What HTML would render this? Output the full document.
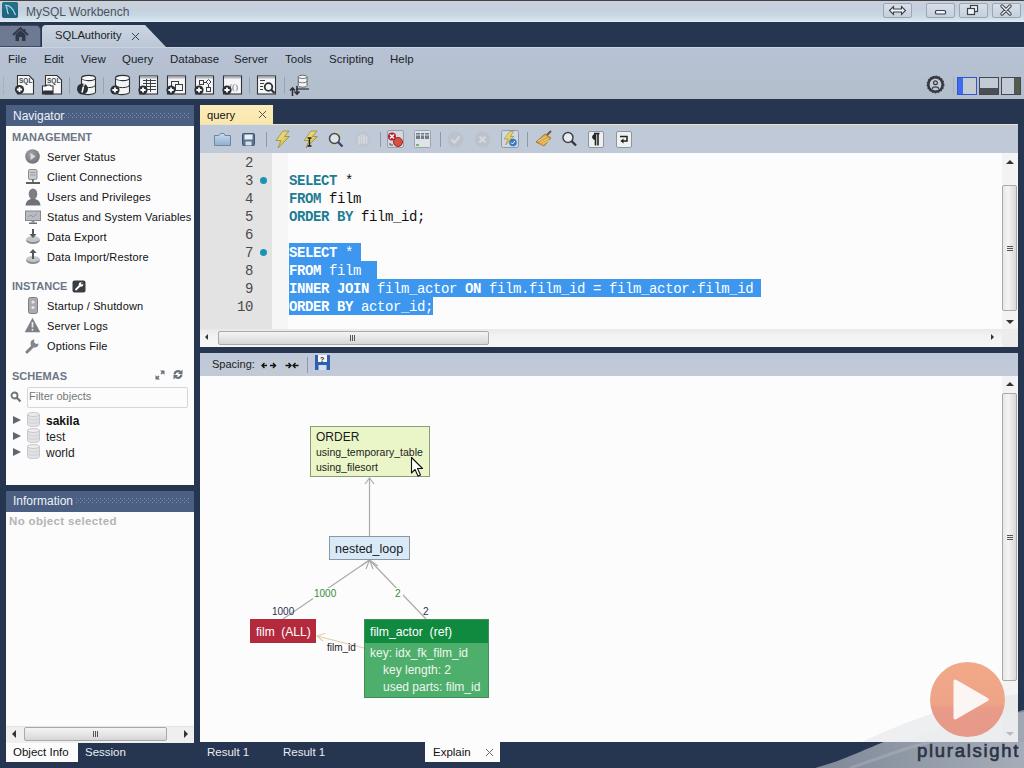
<!DOCTYPE html>
<html><head><meta charset="utf-8">
<style>
*{box-sizing:border-box;margin:0;padding:0}
html,body{width:1024px;height:768px;overflow:hidden;background:#263650;font-family:"Liberation Sans",sans-serif;position:relative}
.a{position:absolute}
.t{position:absolute;white-space:nowrap;line-height:1}
#title{left:0;top:0;width:1024px;height:22px;background:linear-gradient(#cdd0d7 0%,#c4d0de 40%,#c8d6e2 65%,#d4e2ec 88%,#e2eef9 100%);border-top:1px solid #3e444c}
#tabbar{left:0;top:22px;width:1024px;height:25px;background:#263650}
#menubar{left:0;top:47px;width:1024px;height:52px;background:linear-gradient(#b8c2d5,#b5c0d0 50%,#b3becc);border-top:1px solid #c9d3e2}
.menu{font-size:11.5px;color:#1a1f28;top:53.6px}
.nav{font-size:11px;color:#111;letter-spacing:0.15px}
.hdr{font-size:11px;font-weight:bold;color:#6c7786}
.code{font-family:"Liberation Mono",monospace;font-size:14px;letter-spacing:-0.4px;line-height:18px;height:18px}
.kw{color:#1f7c95;font-weight:bold}
.ln{font-family:"Liberation Mono",monospace;font-size:14px;color:#4a4a4a;text-align:right;width:60px;left:193px;letter-spacing:-0.4px}
</style></head><body>
<!-- title bar -->
<div class="a" id="title"></div>
<div class="a" style="left:2px;top:2px;width:16px;height:16px;border-radius:3px;background:linear-gradient(135deg,#3a7c9c,#1f5b75)"></div>
<div class="t" style="left:26px;top:6px;font-size:12px;color:#4a525d">MySQL Workbench</div>

<!-- tab bar -->
<div class="a" id="tabbar"></div>
<div class="a" style="left:0;top:25px;width:41px;height:22px;background:#6d7a92;border-radius:0 5px 0 0;border:1px solid #3e4a5e;border-left:none"></div>
<div class="a" style="left:42px;top:25px;width:124px;height:22px;background:linear-gradient(#ccd5e2,#bcc7d6);clip-path:polygon(0 0,103px 0,124px 22px,0 22px);border-radius:4px 0 0 0"></div>
<svg class="a" style="left:12px;top:26px" width="17" height="17" viewBox="0 0 17 17"><path d="M1 9 L8.5 2 L16 9" fill="none" stroke="#2f3848" stroke-width="1.8"/><path d="M12.5 3 V6" stroke="#2f3848" stroke-width="1.8"/><path d="M3.5 8.5 L8.5 4 L13.5 8.5 V15 H10 V11 H7 V15 H3.5 Z" fill="#2f3848"/></svg>
<div class="t" style="left:55px;top:30px;font-size:11.2px;color:#1a1f28">SQLAuthority</div>
<svg class="a" style="left:131px;top:32px" width="9" height="9" viewBox="0 0 9 9"><path d="M1 1 L8 8 M8 1 L1 8" stroke="#3a3f48" stroke-width="1"/></svg>

<!-- menu + toolbar -->
<div class="a" id="menubar"></div>
<div class="t menu" style="left:8px">File</div>
<div class="t menu" style="left:44px">Edit</div>
<div class="t menu" style="left:81px">View</div>
<div class="t menu" style="left:122px">Query</div>
<div class="t menu" style="left:170px">Database</div>
<div class="t menu" style="left:234px">Server</div>
<div class="t menu" style="left:285px">Tools</div>
<div class="t menu" style="left:329px">Scripting</div>
<div class="t menu" style="left:390px">Help</div>


<!-- main toolbar icons -->
<svg class="a" style="left:0;top:70px" width="320" height="29" viewBox="0 70 320 29">
 <defs>
  <g id="plus"><circle r="4.6" fill="#2b2f36"/><path d="M-2.6 0 H2.6 M0 -2.6 V2.6" stroke="#fff" stroke-width="1.8"/></g>
  <g id="cyl"><path d="M0.5 3 V17 A7 2.6 0 0 0 14.5 17 V3" fill="#f4f4f4" stroke="#2f3238" stroke-width="1.1"/><ellipse cx="7.5" cy="3" rx="7" ry="2.6" fill="#fafafa" stroke="#2f3238" stroke-width="1.1"/><path d="M0.5 10 A7 2.6 0 0 0 14.5 10" fill="none" stroke="#2f3238" stroke-width="1"/></g>
  <g id="frame"><rect x="0.5" y="0.5" width="18" height="18" fill="#f6f6f6" stroke="#2f3238" stroke-width="1.1"/><rect x="1" y="1" width="17" height="2" fill="#b4b8be"/></g>
 </defs>
 <path d="M3.5 77 V94" stroke="#9aa3b0" stroke-dasharray="1 1"/>
 <!-- sql new -->
 <path d="M17.5 75.5 H29 L33.5 80 V94 H17.5 Z" fill="#f7f7f7" stroke="#2f3238" stroke-width="1.1"/>
 <text x="19" y="82.5" font-family="Liberation Sans" font-weight="bold" font-size="6.5" fill="#3f444c">SQL</text>
 <use href="#plus" x="19.5" y="89.5"/>
 <!-- sql open -->
 <path d="M45.5 75.5 H57 L61.5 80 V94 H45.5 Z" fill="#f7f7f7" stroke="#2f3238" stroke-width="1.1"/>
 <text x="47" y="82.5" font-family="Liberation Sans" font-weight="bold" font-size="6.5" fill="#3f444c">SQL</text>
 <path d="M42.5 94 V86 H46 L47 85 H50 L51 86 H53 V94 Z" fill="#fff" stroke="#2f3238" stroke-width="1.1"/>
 <path d="M42 94 L43.5 90.5 H53 V94 Z" fill="#2f3238"/>
 <path d="M69.5 77 V94" stroke="#9aa3b0" stroke-width="1"/>
 <!-- db info -->
 <use href="#cyl" x="81" y="75"/>
 <circle cx="82.5" cy="89" r="5.5" fill="#2b2f36"/>
 <path d="M83.5 86.5 L82 92.5" stroke="#fff" stroke-width="1.6"/><circle cx="84" cy="84.8" r="0.9" fill="#fff"/>
 <path d="M103.5 77 V94" stroke="#9aa3b0" stroke-width="1"/>
 <!-- db new -->
 <use href="#cyl" x="115" y="75"/>
 <use href="#plus" x="115" y="90"/>
 <!-- table new -->
 <use href="#frame" x="139" y="75.5"/>
 <path d="M143 80.5 H156 M143 83.5 H156 M143 86.5 H156 M143 89.5 H156 M146.5 79 V92 M150.5 79 V92" stroke="#3a3e45" stroke-width="1"/>
 <use href="#plus" x="143" y="90"/>
 <!-- view new -->
 <use href="#frame" x="167" y="75.5"/>
 <rect x="171.5" y="81.5" width="7" height="6" fill="none" stroke="#3a3e45"/><rect x="175.5" y="84.5" width="7" height="6" fill="#f6f6f6" stroke="#3a3e45"/>
 <use href="#plus" x="171" y="90"/>
 <!-- routine new -->
 <use href="#frame" x="195" y="75.5"/>
 <rect x="199.5" y="80.5" width="4" height="4" fill="none" stroke="#3a3e45"/><path d="M208.5 79.5 L211 82 L208.5 84.5 L206 82 Z" fill="none" stroke="#3a3e45"/><rect x="206.5" y="87.5" width="4" height="4" fill="none" stroke="#3a3e45"/><path d="M203.5 82.5 H206 M208.5 84.5 V87.5" stroke="#3a3e45"/>
 <use href="#plus" x="199" y="90"/>
 <!-- function new -->
 <use href="#frame" x="223" y="75.5"/>
 <text x="229" y="90" font-family="Liberation Serif" font-size="9" fill="#6a6e75">f()</text>
 <use href="#plus" x="227" y="90"/>
 <path d="M249.5 77 V94" stroke="#9aa3b0" stroke-width="1"/>
 <!-- search table -->
 <use href="#frame" x="257" y="75.5"/>
 <path d="M260 80.5 H265 M260 83.5 H264 M260 86.5 H263 M260 89.5 H263" stroke="#3a3e45"/>
 <circle cx="268.5" cy="87" r="3.8" fill="#f6f6f6" stroke="#2b2f36" stroke-width="1.8"/><path d="M271 89.5 L274.5 93" stroke="#2b2f36" stroke-width="2.2"/>
 <path d="M284.5 77 V94" stroke="#9aa3b0" stroke-width="1"/>
 <!-- migration -->
 <g transform="translate(298,75) scale(0.62)"><use href="#cyl"/></g>
 <path d="M296 89 H309" stroke="#2f3238" stroke-width="1.2"/>
 <path d="M292.5 96 V88 M290 90.5 L292.5 88 L295 90.5" stroke="#2b2f36" stroke-width="1.6" fill="none"/>
 <path d="M297 86 V94 M294.5 91.5 L297 94 L299.5 91.5" stroke="#2b2f36" stroke-width="1.6" fill="none"/>
</svg>

<!-- left navigator -->
<div class="a" style="left:6px;top:105px;width:188px;height:21px;background:#4b5f83"></div>
<svg class="a" style="left:64px;top:113px" width="126" height="7" viewBox="0 0 126 7"><defs><pattern id="dp113" x="0" y="0" width="4" height="4" patternUnits="userSpaceOnUse"><rect x="0" y="0" width="1" height="1" fill="#8193b2"/><rect x="2" y="2" width="1" height="1" fill="#8193b2"/></pattern></defs><rect x="0" y="0" width="126" height="6" fill="url(#dp113)"/></svg>
<div class="t" style="left:13px;top:110px;font-size:12px;color:#eef2f8">Navigator</div>
<div class="a" style="left:6px;top:126px;width:188px;height:359px;background:#fcfcfd"></div>

<div class="a" style="left:6px;top:491px;width:188px;height:21px;background:#4b5f83"></div>
<svg class="a" style="left:76px;top:498px" width="114" height="7" viewBox="0 0 114 7"><defs><pattern id="dp498" x="0" y="0" width="4" height="4" patternUnits="userSpaceOnUse"><rect x="0" y="0" width="1" height="1" fill="#8193b2"/><rect x="2" y="2" width="1" height="1" fill="#8193b2"/></pattern></defs><rect x="0" y="0" width="114" height="6" fill="url(#dp498)"/></svg>
<div class="t" style="left:13px;top:495px;font-size:12px;color:#eef2f8">Information</div>
<div class="a" style="left:6px;top:512px;width:188px;height:231px;background:#fcfcfd"></div>


<!-- navigator content -->
<div class="t hdr" style="left:12px;top:132px;font-size:11px">MANAGEMENT</div>
<svg class="a" style="left:24px;top:148px" width="17" height="17" viewBox="0 0 17 17"><defs><radialGradient id="g1" cx="0.4" cy="0.35" r="0.7"><stop offset="0" stop-color="#a3a5aa"/><stop offset="1" stop-color="#6c6e74"/></radialGradient></defs><circle cx="8.5" cy="8.5" r="7.3" fill="url(#g1)"/><path d="M6.5 5 L11.5 8.5 L6.5 12 Z" fill="#d8d9dc"/></svg>
<div class="t nav" style="left:47px;top:152px">Server Status</div>
<svg class="a" style="left:25px;top:169px" width="16" height="16" viewBox="0 0 16 16"><rect x="3.5" y="0.5" width="8.5" height="10" rx="1.5" fill="#c9cacd" stroke="#8d8f94"/><path d="M5 3.5h5.5M5 6h5.5" stroke="#9a9ca0"/><rect x="7" y="10" width="1.8" height="3" fill="#707278"/><rect x="1" y="13" width="14" height="2" fill="#5e6066"/></svg>
<div class="t nav" style="left:47px;top:172px">Client Connections</div>
<svg class="a" style="left:25px;top:188px" width="16" height="18" viewBox="0 0 16 18"><ellipse cx="8" cy="6" rx="4.3" ry="5.5" fill="#7c7e84"/><path d="M0.5 17.5 C1 12.5 4 11 8 11 C12 11 15 12.5 15.5 17.5 Z" fill="#6f7177"/></svg>
<div class="t nav" style="left:47px;top:192px">Users and Privileges</div>
<svg class="a" style="left:25px;top:210px" width="16" height="15" viewBox="0 0 16 15"><rect x="0.5" y="1" width="15" height="9.5" fill="#b9bbbf" stroke="#86888d"/><path d="M3 7 L6 5 L8 7 L12 4" stroke="#8a9cb0" fill="none"/><rect x="6.5" y="10.5" width="3" height="2" fill="#8d8f94"/><rect x="4" y="12.5" width="8" height="1.5" fill="#6d6f75"/></svg>
<div class="t nav" style="left:47px;top:212px">Status and System Variables</div>
<svg class="a" style="left:25px;top:228px" width="16" height="17" viewBox="0 0 16 17"><ellipse cx="8" cy="12.5" rx="6.8" ry="3.5" fill="#8a8c91"/><ellipse cx="8" cy="11" rx="6.8" ry="3" fill="#c4c5c8"/><path d="M8 1 V9" stroke="#55575c" stroke-width="2"/><path d="M4.5 6 L8 10 L11.5 6 Z" fill="#55575c"/></svg>
<div class="t nav" style="left:47px;top:232px">Data Export</div>
<svg class="a" style="left:25px;top:248px" width="16" height="17" viewBox="0 0 16 17"><ellipse cx="8" cy="12.5" rx="6.8" ry="3.5" fill="#8a8c91"/><ellipse cx="8" cy="11" rx="6.8" ry="3" fill="#c4c5c8"/><path d="M8 4 V11" stroke="#55575c" stroke-width="2"/><path d="M4.5 5 L8 1 L11.5 5 Z" fill="#55575c"/></svg>
<div class="t nav" style="left:47px;top:252px">Data Import/Restore</div>

<div class="t hdr" style="left:12px;top:281px;font-size:11px">INSTANCE</div>
<svg class="a" style="left:72px;top:280px" width="14" height="13" viewBox="0 0 14 13"><rect x="0.5" y="0.5" width="13" height="12" rx="2" fill="#3a3c42"/><path d="M3.5 10 L8 5.5" stroke="#fff" stroke-width="1.8"/><circle cx="9" cy="4.5" r="2.3" fill="#fff"/><circle cx="10" cy="3.5" r="1" fill="#3a3c42"/></svg>
<svg class="a" style="left:27px;top:297px" width="12" height="17" viewBox="0 0 12 17"><rect x="1.5" y="0.5" width="9" height="16" rx="2" fill="#a9abaf" stroke="#7c7e83"/><circle cx="6" cy="5" r="1.6" fill="#e6e6e8"/><circle cx="6" cy="10.5" r="1.6" fill="#e6e6e8"/></svg>
<div class="t nav" style="left:47px;top:301px">Startup / Shutdown</div>
<svg class="a" style="left:24px;top:317px" width="17" height="16" viewBox="0 0 17 16"><path d="M8.5 0.8 L16.3 15.3 H0.7 Z" fill="#7d7f85"/><path d="M8.5 5 V10.5" stroke="#e8e8ea" stroke-width="1.8"/><circle cx="8.5" cy="12.8" r="1" fill="#e8e8ea"/></svg>
<div class="t nav" style="left:47px;top:321px">Server Logs</div>
<svg class="a" style="left:25px;top:337px" width="16" height="17" viewBox="0 0 16 17"><path d="M2 15 L9 8" stroke="#7f8186" stroke-width="3" stroke-linecap="round"/><path d="M9.5 2.5 a4 4 0 1 0 4 4 l-2.5 0.5 l-2 -2 z" fill="#85878c"/></svg>
<div class="t nav" style="left:47px;top:341px">Options File</div>

<div class="t hdr" style="left:12px;top:371px;font-size:11px">SCHEMAS</div>
<svg class="a" style="left:155px;top:370px" width="10" height="10" viewBox="0 0 10 10"><path d="M1.5 8.5 L4 6 M6 4 L8.5 1.5" stroke="#6a717b" stroke-width="1.6"/><path d="M0.5 5 V9.5 H5 Z M5 0.5 H9.5 V5 Z" fill="#6a717b"/></svg>
<svg class="a" style="left:172px;top:369px" width="12" height="11" viewBox="0 0 12 11"><path d="M2.5 5.5 a3.5 3.5 0 0 1 6 -2.3" fill="none" stroke="#6a717b" stroke-width="2.2"/><path d="M9.5 5.5 a3.5 3.5 0 0 1 -6 2.3" fill="none" stroke="#6a717b" stroke-width="2.2"/><path d="M10.5 0.5 V5 H6Z M1.5 10.5 V6 H6Z" fill="#6a717b"/></svg>
<svg class="a" style="left:10px;top:391px" width="12" height="12" viewBox="0 0 12 12"><circle cx="4.5" cy="4.5" r="3" fill="none" stroke="#6f737a" stroke-width="1.8"/><path d="M6.8 6.8 L10.5 10.5" stroke="#6f737a" stroke-width="2.2"/></svg>
<div class="a" style="left:27px;top:387px;width:161px;height:21px;border:1px solid #d4d6da;border-radius:2px;background:#fcfcfc"></div>
<div class="t" style="left:29px;top:391px;font-size:11px;color:#777">Filter objects</div>

<div class="a" style="left:13px;top:416px;width:0;height:0;border-top:4.5px solid transparent;border-bottom:4.5px solid transparent;border-left:8px solid #5f6672"></div>
<div class="a" style="left:13px;top:432px;width:0;height:0;border-top:4.5px solid transparent;border-bottom:4.5px solid transparent;border-left:8px solid #5f6672"></div>
<div class="a" style="left:13px;top:448px;width:0;height:0;border-top:4.5px solid transparent;border-bottom:4.5px solid transparent;border-left:8px solid #5f6672"></div>
<svg class="a" style="left:27px;top:412px" width="13" height="15" viewBox="0 0 13 15"><path d="M0.5 2.5 V12.5 A6 2.2 0 0 0 12.5 12.5 V2.5 Z" fill="#e3e3e5" stroke="#c6c7ca"/><ellipse cx="6.5" cy="2.5" rx="6" ry="2" fill="#ececee" stroke="#c6c7ca"/><path d="M0.5 6 A6 2 0 0 0 12.5 6 M0.5 9.3 A6 2 0 0 0 12.5 9.3" fill="none" stroke="#cfd0d3"/></svg>
<svg class="a" style="left:27px;top:428px" width="13" height="15" viewBox="0 0 13 15"><path d="M0.5 2.5 V12.5 A6 2.2 0 0 0 12.5 12.5 V2.5 Z" fill="#e3e3e5" stroke="#c6c7ca"/><ellipse cx="6.5" cy="2.5" rx="6" ry="2" fill="#ececee" stroke="#c6c7ca"/><path d="M0.5 6 A6 2 0 0 0 12.5 6 M0.5 9.3 A6 2 0 0 0 12.5 9.3" fill="none" stroke="#cfd0d3"/></svg>
<svg class="a" style="left:27px;top:444px" width="13" height="15" viewBox="0 0 13 15"><path d="M0.5 2.5 V12.5 A6 2.2 0 0 0 12.5 12.5 V2.5 Z" fill="#e3e3e5" stroke="#c6c7ca"/><ellipse cx="6.5" cy="2.5" rx="6" ry="2" fill="#ececee" stroke="#c6c7ca"/><path d="M0.5 6 A6 2 0 0 0 12.5 6 M0.5 9.3 A6 2 0 0 0 12.5 9.3" fill="none" stroke="#cfd0d3"/></svg>
<div class="t" style="left:46px;top:415px;font-size:12px;font-weight:bold;color:#111">sakila</div>
<div class="t" style="left:46px;top:431px;font-size:12px;color:#222">test</div>
<div class="t" style="left:46px;top:447px;font-size:12px;color:#222">world</div>

<div class="t" style="left:9px;top:516px;font-size:11.5px;font-weight:bold;color:#b4b4b4;letter-spacing:0.35px">No object selected</div>

<!-- query panel -->
<div class="a" style="left:200px;top:105px;width:73px;height:20px;background:linear-gradient(#fcecb8,#f9e6ae)"></div>
<div class="t" style="left:207px;top:110px;font-size:11.2px;color:#111">query</div>
<svg class="a" style="left:258px;top:110px" width="9" height="9" viewBox="0 0 9 9"><path d="M1 1 L8 8 M8 1 L1 8" stroke="#555a60" stroke-width="1"/></svg>
<div class="a" style="left:200px;top:124px;width:818px;height:29px;background:#c0c9d7;border-top:1px solid #e9e4c0"></div>
<div class="a" style="left:200px;top:153px;width:818px;height:194px;background:#fcfcfc"></div>
<div class="a" style="left:200px;top:153px;width:72px;height:176px;background:#e3e3e3"></div>


<!-- editor -->
<div class="a" style="left:272px;top:153px;width:16px;height:176px;background:#f6f6f6"></div>
<div class="t ln" style="top:156px">2</div>
<div class="t ln" style="top:174px">3</div>
<div class="t ln" style="top:192px">4</div>
<div class="t ln" style="top:210px">5</div>
<div class="t ln" style="top:228px">6</div>
<div class="t ln" style="top:246px">7</div>
<div class="t ln" style="top:264px">8</div>
<div class="t ln" style="top:282px">9</div>
<div class="t ln" style="top:300px">10</div>
<div class="a" style="left:260px;top:177px;width:7px;height:7px;border-radius:50%;background:#1b93b8"></div>
<div class="a" style="left:260px;top:249px;width:7px;height:7px;border-radius:50%;background:#1b93b8"></div>
<div class="a" style="left:289px;top:243px;width:72px;height:18px;background:#3d97ef"></div>
<div class="a" style="left:289px;top:261px;width:88px;height:18px;background:#3d97ef"></div>
<div class="a" style="left:289px;top:279px;width:472px;height:18px;background:#3d97ef"></div>
<div class="a" style="left:289px;top:297px;width:144px;height:18px;background:#3d97ef"></div>
<div class="t code" style="left:289px;top:172px;color:#111"><span class="kw">SELECT</span> *</div>
<div class="t code" style="left:289px;top:190px;color:#111"><span class="kw">FROM</span> film</div>
<div class="t code" style="left:289px;top:208px;color:#111"><span class="kw">ORDER</span> <span class="kw">BY</span> film_id;</div>
<div class="t code" style="left:289px;top:244px;color:#fff"><b>SELECT</b> *</div>
<div class="t code" style="left:289px;top:262px;color:#fff"><b>FROM</b> film</div>
<div class="t code" style="left:289px;top:280px;color:#fff"><b>INNER</b> <b>JOIN</b> film_actor <b>ON</b> film.film_id = film_actor.film_id</div>
<div class="t code" style="left:289px;top:298px;color:#fff"><b>ORDER</b> <b>BY</b> actor_id;</div>
<!-- editor scrollbars -->
<div class="a" style="left:1002px;top:153px;width:16px;height:176px;background:#f3f3f3"></div>
<div class="a" style="left:1002px;top:185px;width:15px;height:126px;border:1px solid #a9a9a9;border-radius:2px;background:linear-gradient(90deg,#e6e6e6,#f4f4f4 40%,#d9d9d9)"></div>
<div class="a" style="left:1007px;top:246px;width:6px;height:1px;background:#555;box-shadow:0 2px #555,0 4px #555"></div>
<div class="a" style="left:1006px;top:160px;width:0;height:0;border-left:4px solid transparent;border-right:4px solid transparent;border-bottom:4px solid #333"></div>
<div class="a" style="left:1006px;top:320px;width:0;height:0;border-left:4px solid transparent;border-right:4px solid transparent;border-top:4px solid #333"></div>
<div class="a" style="left:200px;top:329px;width:802px;height:18px;background:linear-gradient(#e9e9e9,#f3f3f3 40%,#f6f6f6)"></div>
<div class="a" style="left:1002px;top:329px;width:16px;height:18px;background:#ececec"></div>
<div class="a" style="left:218px;top:331px;width:271px;height:14px;border:1px solid #a9a9a9;border-radius:2px;background:linear-gradient(#f4f4f4,#e6e6e6 50%,#d6d6d6)"></div>
<div class="a" style="left:350px;top:335px;width:1px;height:6px;background:#555;box-shadow:2px 0 #555,4px 0 #555"></div>
<div class="a" style="left:205px;top:334px;width:0;height:0;border-top:3.5px solid transparent;border-bottom:3.5px solid transparent;border-right:3.5px solid #333"></div>
<div class="a" style="left:991px;top:334px;width:0;height:0;border-top:3.5px solid transparent;border-bottom:3.5px solid transparent;border-left:3.5px solid #333"></div>

<div class="a" style="left:200px;top:353px;width:818px;height:23px;background:linear-gradient(#bdc8da,#c2cad6)"></div>
<div class="t" style="left:212px;top:359px;font-size:11px;color:#222">Spacing:</div>
<div class="a" style="left:200px;top:376px;width:818px;height:366px;background:#fcfcfd"></div>


<!-- explain canvas -->
<svg class="a" style="left:200px;top:376px" width="802" height="366" viewBox="200 376 802 366">
 <g stroke="#ababab" stroke-width="1.2" fill="none">
  <path d="M369.5 536 V478"/>
  <path d="M365 484 L369.5 478 L374 484"/>
  <path d="M283 619 L369.5 560"/>
  <path d="M426 619 L369.5 560"/>
  <path d="M361 566 L369.5 560 L366 569 M378 566 L369.5 560 L373 569"/>
 </g>
 <path d="M364 648 L317 636" stroke="#e2cba8" stroke-width="1.1" fill="none"/>
 <path d="M325 633.5 L317 636 L323 641" stroke="#e2cba8" stroke-width="1.1" fill="none"/>
 <rect x="313" y="588" width="26" height="13" fill="#fcfcfd"/>
 <rect x="393" y="588" width="10" height="13" fill="#fcfcfd"/>
 <rect x="310.5" y="426.5" width="119" height="50" fill="#eaf6c7" stroke="#8d9a7b"/>
 <rect x="329.5" y="536.5" width="80" height="23" fill="#d9e9f8" stroke="#8c97a4"/>
 <rect x="250" y="619" width="66" height="24" fill="#b32a3d"/>
 <rect x="364" y="619" width="125" height="24" fill="#0f8a3f"/>
 <rect x="364" y="643" width="125" height="55" fill="#4eae6c"/>
 <rect x="364.5" y="619.5" width="124" height="78" fill="none" stroke="#3f8f58"/>
</svg>
<div class="t" style="left:316px;top:431px;font-size:12px;color:#1a1a1a">ORDER</div>
<div class="t" style="left:316px;top:447px;font-size:10.5px;color:#222">using_temporary_table</div>
<div class="t" style="left:316px;top:462px;font-size:10.5px;color:#222">using_filesort</div>
<div class="t" style="left:335px;top:543px;font-size:12.5px;color:#1a1a1a">nested_loop</div>
<div class="t" style="left:314px;top:589px;font-size:10px;color:#3a8a3a">1000</div>
<div class="t" style="left:395px;top:589px;font-size:10px;color:#3a8a3a">2</div>
<div class="t" style="left:272px;top:607px;font-size:10px;color:#2a2f55">1000</div>
<div class="t" style="left:423px;top:607px;font-size:10px;color:#2a2f55">2</div>
<div class="t" style="left:256px;top:626px;font-size:12px;color:#fff">film&nbsp; (ALL)</div>
<div class="t" style="left:370px;top:626px;font-size:12.2px;color:#fff">film_actor&nbsp; (ref)</div>
<div class="t" style="left:370px;top:647px;font-size:12px;color:#eef6ef">key: idx_fk_film_id</div>
<div class="t" style="left:383px;top:664px;font-size:12px;color:#eef6ef">key length: 2</div>
<div class="t" style="left:383px;top:681px;font-size:12px;color:#eef6ef">used parts: film_id</div>
<div class="t" style="left:327px;top:643px;font-size:10px;color:#1a1a1a">film_id</div>
<!-- explain scrollbar -->
<div class="a" style="left:1002px;top:376px;width:16px;height:366px;background:#f3f3f3"></div>
<div class="a" style="left:1002px;top:393px;width:15px;height:288px;border:1px solid #a9a9a9;border-radius:2px;background:linear-gradient(90deg,#e6e6e6,#f4f4f4 40%,#d9d9d9)"></div>
<div class="a" style="left:1007px;top:535px;width:6px;height:1px;background:#555;box-shadow:0 2px #555,0 4px #555"></div>
<div class="a" style="left:1006px;top:382px;width:0;height:0;border-left:4px solid transparent;border-right:4px solid transparent;border-bottom:4px solid #333"></div>
<div class="a" style="left:1006px;top:732px;width:0;height:0;border-left:4px solid transparent;border-right:4px solid transparent;border-top:4px solid #333"></div>

<!-- info scrollbar -->
<div class="a" style="left:6px;top:726px;width:188px;height:17px;background:#efefef;border-top:1px solid #e4e4e4"></div>
<div class="a" style="left:24px;top:727px;width:143px;height:14px;border:1px solid #a9a9a9;border-radius:2px;background:linear-gradient(#f4f4f4,#e6e6e6 50%,#d6d6d6)"></div>
<div class="a" style="left:93px;top:731px;width:1px;height:6px;background:#555;box-shadow:2px 0 #555,4px 0 #555"></div>
<div class="a" style="left:12px;top:730px;width:0;height:0;border-top:4px solid transparent;border-bottom:4px solid transparent;border-right:4px solid #333"></div>
<div class="a" style="left:184px;top:730px;width:0;height:0;border-top:4px solid transparent;border-bottom:4px solid transparent;border-left:4px solid #333"></div>

<!-- bottom tabs -->
<div class="a" style="left:6px;top:743px;width:72px;height:19px;background:#fcfcfd"></div>
<div class="t" style="left:13px;top:747px;font-size:11.5px;color:#111">Object Info</div>
<div class="t" style="left:85px;top:747px;font-size:11.5px;color:#e8ecf2">Session</div>
<div class="t" style="left:207px;top:747px;font-size:11.5px;color:#e8ecf2">Result 1</div>
<div class="t" style="left:283px;top:747px;font-size:11.5px;color:#e8ecf2">Result 1</div>
<div class="a" style="left:425px;top:742px;width:75px;height:20px;background:#fcfcfd"></div>
<div class="t" style="left:433px;top:747px;font-size:11.5px;color:#111">Explain</div>
<svg class="a" style="left:485px;top:748px" width="9" height="9" viewBox="0 0 9 9"><path d="M1 1 L8 8 M8 1 L1 8" stroke="#6a6f78" stroke-width="1"/></svg>


<!-- window buttons -->
<div class="a" style="left:883px;top:3px;width:29px;height:15px;border:1px solid #9ba6b4;border-radius:2px;background:linear-gradient(#d6dfea,#c6d1de)"></div>
<div class="a" style="left:926px;top:3px;width:29px;height:15px;border:1px solid #9ba6b4;border-radius:2px;background:linear-gradient(#d6dfea,#c6d1de)"></div>
<div class="a" style="left:959px;top:3px;width:29px;height:15px;border:1px solid #9ba6b4;border-radius:2px;background:linear-gradient(#d6dfea,#c6d1de)"></div>
<div class="a" style="left:992px;top:3px;width:29px;height:15px;border:1px solid #9ba6b4;border-radius:2px;background:linear-gradient(#d6dfea,#c6d1de)"></div>
<svg class="a" style="left:880px;top:0" width="144" height="22" viewBox="880 0 144 22">
 <path d="M889.5 10.5 L893.5 6.5 V9 H901.5 V6.5 L905.5 10.5 L901.5 14.5 V12 H893.5 V14.5 Z" fill="#f2f5f8" stroke="#3b4049" stroke-width="1.1"/>
 <rect x="935.5" y="10.5" width="10" height="3.5" rx="1" fill="#f2f5f8" stroke="#3b4049" stroke-width="1.2"/>
 <rect x="970.5" y="5.5" width="7" height="6" fill="#f2f5f8" stroke="#3b4049" stroke-width="1.2"/>
 <rect x="967.5" y="8.5" width="7" height="6" fill="#f2f5f8" stroke="#3b4049" stroke-width="1.2"/>
 <path d="M1002 6 L1010 14 M1010 6 L1002 14" stroke="#3b4049" stroke-width="3.4" stroke-linecap="round"/>
 <path d="M1002 6 L1010 14 M1010 6 L1002 14" stroke="#f2f5f8" stroke-width="1.4" stroke-linecap="round"/>
</svg>
<!-- logo -->
<svg class="a" style="left:2px;top:2px" width="16" height="16" viewBox="0 0 16 16"><rect x="0" y="0" width="16" height="16" rx="2.5" fill="#21667f"/><rect x="0" y="0" width="16" height="8" rx="2.5" fill="#2c7590" opacity="0.6"/><path d="M3 3.5 C7 3 11 6.5 13.5 13 M4 4.5 C6 6.5 4.5 10 6.5 12" fill="none" stroke="#a6dbe9" stroke-width="1.2"/></svg>

<!-- right toolbar -->
<svg class="a" style="left:920px;top:70px" width="104" height="29" viewBox="920 70 104 29">
 <circle cx="935.5" cy="84.5" r="7.2" fill="none" stroke="#35393f" stroke-width="2.6"/>
 <circle cx="935.5" cy="84.5" r="8.3" fill="none" stroke="#35393f" stroke-width="1.2" stroke-dasharray="1.6 1.4"/>
 <circle cx="935.5" cy="84.5" r="5.6" fill="#c3cad5"/>
 <circle cx="935.5" cy="82.8" r="1.9" fill="none" stroke="#35393f" stroke-width="1.2"/>
 <path d="M932.3 88.8 C932.8 86.2 938.2 86.2 938.7 88.8" fill="none" stroke="#35393f" stroke-width="1.2"/>
 <path d="M953.5 76 V94" stroke="#a8b1bd"/>
 <rect x="957.5" y="77.5" width="19" height="17" fill="#c3cbd6" stroke="#3556c8" stroke-width="1"/>
 <rect x="958" y="78" width="5" height="16" fill="#3e6cf0"/>
 <rect x="979.5" y="77.5" width="19" height="17" fill="#c3cbd6" stroke="#45484e" stroke-width="1"/>
 <rect x="980" y="88" width="18" height="6" fill="#4b4e55"/>
 <rect x="1001.5" y="77.5" width="19" height="17" fill="#c3cbd6" stroke="#45484e" stroke-width="1"/>
 <rect x="1014" y="78" width="6" height="16" fill="#555a4e"/>
</svg>

<!-- editor toolbar icons -->
<svg class="a" style="left:200px;top:125px" width="450" height="28" viewBox="200 125 450 28">
 <defs>
  <linearGradient id="fold" x1="0" y1="0" x2="0" y2="1"><stop offset="0" stop-color="#c6dbef"/><stop offset="1" stop-color="#8fb0cf"/></linearGradient>
  <linearGradient id="bolt" x1="0" y1="0" x2="1" y2="1"><stop offset="0" stop-color="#f6ec9a"/><stop offset="1" stop-color="#c9b033"/></linearGradient>
 </defs>
 <path d="M214.5 135.5 H219 L220.5 133.5 H224 L225 135.5 H230.5 V145.5 H214.5 Z" fill="url(#fold)" stroke="#6f86a0" stroke-width="1"/>
 <rect x="242.5" y="133.5" width="12" height="12" rx="1" fill="#5a7490" stroke="#3f556d"/>
 <rect x="244.5" y="134.5" width="8" height="5" fill="#e8f0f7"/>
 <rect x="245.5" y="141.5" width="6" height="4" fill="#d7e1ea"/>
 <path d="M266.5 132 V147" stroke="#8e98a6"/>
 <path d="M283 131 L276 140.5 H281 L278 148 L289.5 136.5 H284.5 L289 131 Z" fill="url(#bolt)" stroke="#9c8a3a" stroke-width="0.8"/>
 <path d="M311 131 L304 140.5 H309 L306 148 L317.5 136.5 H312.5 L317 131 Z" fill="url(#bolt)" stroke="#9c8a3a" stroke-width="0.8"/>
 <path d="M307.5 138 H311.5 M309.5 138 V146 M307.5 146 H311.5" stroke="#222" stroke-width="1.3"/>
 <path d="M335 131 L328 140.5 H333 L330 148 L341.5 136.5 H336.5 L341 131 Z" fill="url(#bolt)" opacity="0.55"/>
 <circle cx="334.5" cy="138.5" r="5" fill="#dfe4e6" stroke="#454a50" stroke-width="1.5"/>
 <path d="M338 142 L342.5 146.5" stroke="#3a4660" stroke-width="2.3"/>
 <circle cx="362.5" cy="139.5" r="8" fill="#bfc5cd"/>
 <path d="M359 144 V137 M361.5 143 V135 M364 143 V135.5 M366.5 143 V137" stroke="#d3d8de" stroke-width="1.8" stroke-linecap="round"/>
 <path d="M380.5 132 V147" stroke="#8e98a6"/>
 <rect x="387.5" y="130.5" width="16" height="17" rx="1.5" fill="#d4d7dc" stroke="#9ba0a7"/>
 <circle cx="392" cy="136.5" r="4" fill="#b2203a"/>
 <path d="M390 134.5 L394 138.5 M394 134.5 L390 138.5" stroke="#fff" stroke-width="1.3"/>
 <circle cx="398" cy="142" r="4.5" fill="#d9503f" stroke="#a2202f"/>
 <path d="M390 143 V145 H393" stroke="#555" fill="none"/>
 <rect x="414.5" y="130.5" width="16" height="17" rx="1" fill="#dfe3e8" stroke="#9ba3ad"/>
 <rect x="416" y="133" width="13" height="6" fill="#6f7b88"/>
 <path d="M416 135 H429 M420.5 133 V139 M424.5 133 V139" stroke="#f0f2f5" stroke-width="0.8"/>
 <path d="M416 145 H419" stroke="#4fa04a" stroke-width="1.4"/>
 <path d="M440.5 132 V147" stroke="#8e98a6"/>
 <circle cx="455.5" cy="139.5" r="8" fill="#bcc2ca"/><path d="M451.5 139.5 L454.5 142.5 L459.5 136.5" stroke="#d5dae0" stroke-width="2" fill="none"/>
 <circle cx="482.5" cy="139.5" r="8" fill="#bcc2ca"/><path d="M479.5 136.5 L485.5 142.5 M485.5 136.5 L479.5 142.5" stroke="#d5dae0" stroke-width="2"/>
 <rect x="501.5" y="130.5" width="17" height="17" rx="2" fill="#d2d8e0" stroke="#8f9aa7"/>
 <path d="M510 131.5 L504 139 H508 L505.5 145 L514 136.5 H510.5 L513.5 131.5 Z" fill="url(#bolt)" stroke="#9c8a3a" stroke-width="0.6"/>
 <circle cx="513" cy="142.5" r="3.8" fill="#3a78c8"/><path d="M511 142.5 L512.5 144 L515 141" stroke="#fff" stroke-width="1" fill="none"/>
 <path d="M527.5 132 V147" stroke="#8e98a6"/>
 <path d="M536 142 L545 134 L551 138 L544 146 Z" fill="#d8a44a" stroke="#9a6a2a" stroke-width="0.8"/>
 <path d="M538 141 L546 136.5 M540 143 L548 138.5 M542 144.5 L549.5 140" stroke="#f3d488" stroke-width="0.9"/>
 <path d="M547 135 L551 131" stroke="#6a5a3a" stroke-width="2"/>
 <circle cx="568" cy="137.5" r="5" fill="#e8ecef" stroke="#3f444b" stroke-width="1.5"/>
 <path d="M571.5 141 L576 145.5" stroke="#2f3440" stroke-width="2.3"/>
 <rect x="588.5" y="131.5" width="15" height="16" rx="1.5" fill="#eef0f2" stroke="#8e949c"/>
 <path d="M594 133.5 H599.5 M595.5 133.5 V145.5 M598 133.5 V145.5" stroke="#222" stroke-width="1.6"/>
 <path d="M595.5 134 C591 134 591 140 595.5 140 Z" fill="#222"/>
 <rect x="616.5" y="131.5" width="15" height="16" rx="1.5" fill="#eef0f2" stroke="#8e949c"/>
 <path d="M620 136.5 H627 V141 H621.5" fill="none" stroke="#222" stroke-width="1.5"/>
 <path d="M623.5 138.5 L620.5 141 L623.5 143.5 Z" fill="#222"/>
</svg>

<!-- spacing toolbar icons -->
<svg class="a" style="left:255px;top:353px" width="80" height="23" viewBox="255 353 80 23">
 <path d="M264.5 357 V373 M274.5 357 V373" stroke="#d8d0a0" stroke-width="1" opacity="0.6"/>
 <path d="M262 365.5 H267 M264.5 363 L262 365.5 L264.5 368 M270 365.5 H275.5 M273 363 L275.5 365.5 L273 368" stroke="#111" stroke-width="1.4" fill="none"/>
 <path d="M287.5 357 V373 M296.5 357 V373" stroke="#d8d0a0" stroke-width="1" opacity="0.6"/>
 <path d="M285.5 365.5 H291 M288.5 363 L291 365.5 L288.5 368 M293 365.5 H298.5 M295.5 363 L293 365.5 L295.5 368" stroke="#111" stroke-width="1.4" fill="none"/>
 <path d="M307.5 357 V373" stroke="#8e98a6"/>
 <rect x="315" y="355" width="15" height="15" fill="#2f5fae"/>
 <rect x="318" y="355" width="9" height="7" fill="#f5f7fa"/>
 <rect x="318.5" y="365" width="8" height="5" fill="#cfe0f2"/>
 <text x="320" y="361.5" font-family="Liberation Sans" font-weight="bold" font-size="7" fill="#222">?</text>
</svg>


<!-- watermark -->
<svg class="a" style="left:780px;top:640px" width="244" height="128" viewBox="780 640 244 128">
 <defs>
  <linearGradient id="wmg" x1="0" y1="0" x2="0" y2="1"><stop offset="0" stop-color="#f1a98a"/><stop offset="0.55" stop-color="#eea587"/><stop offset="0.62" stop-color="#e99b88"/><stop offset="1" stop-color="#e7998a"/></linearGradient>
  <linearGradient id="swg" x1="0" y1="0" x2="1" y2="0"><stop offset="0" stop-color="#7f8898"/><stop offset="1" stop-color="#a6adb8"/></linearGradient>
 </defs>
 <path d="M862 742 C905 722 955 702 1018 694 V742 Z" fill="#dfe2e6" opacity="0.5"/>
 <path d="M905 742 C940 728 980 716 1024 712 V742 Z" fill="#e9ebee" opacity="0.5"/>
 <path d="M815 768 C845 760 865 749 884 742 H1024 V768 Z" fill="url(#swg)"/>
 <path d="M850 768 C880 758 905 748 930 742" stroke="#b9bfc8" stroke-width="3" fill="none" opacity="0.35"/>
 <path d="M1018 712 C1020 711 1022 710 1024 710 V742 H1018 Z" fill="#aab1bc" opacity="0.7"/>
 <circle cx="967.5" cy="699.5" r="37.5" fill="url(#wmg)"/>
 <path d="M956.5 680 Q953.5 678.3 953.5 681.8 V717.2 Q953.5 720.7 956.5 719 L987.3 701.3 Q990.3 699.5 987.3 697.7 Z" fill="#fbf6f4"/>
</svg>
<div class="t" style="left:917px;top:742px;font-size:18.5px;font-weight:normal;-webkit-text-stroke:0.6px #2b3245;color:#2b3245;letter-spacing:1.7px">pluralsight</div>

<!-- mouse cursor -->
<svg class="a" style="left:410px;top:456px" width="16" height="22" viewBox="0 0 16 22"><path d="M1.5 1.5 V17 L5 13.5 L8 20 L10.5 19 L7.5 12.5 H12.5 Z" fill="#fff" stroke="#111" stroke-width="1.1" stroke-linejoin="round"/></svg>

</body></html>
